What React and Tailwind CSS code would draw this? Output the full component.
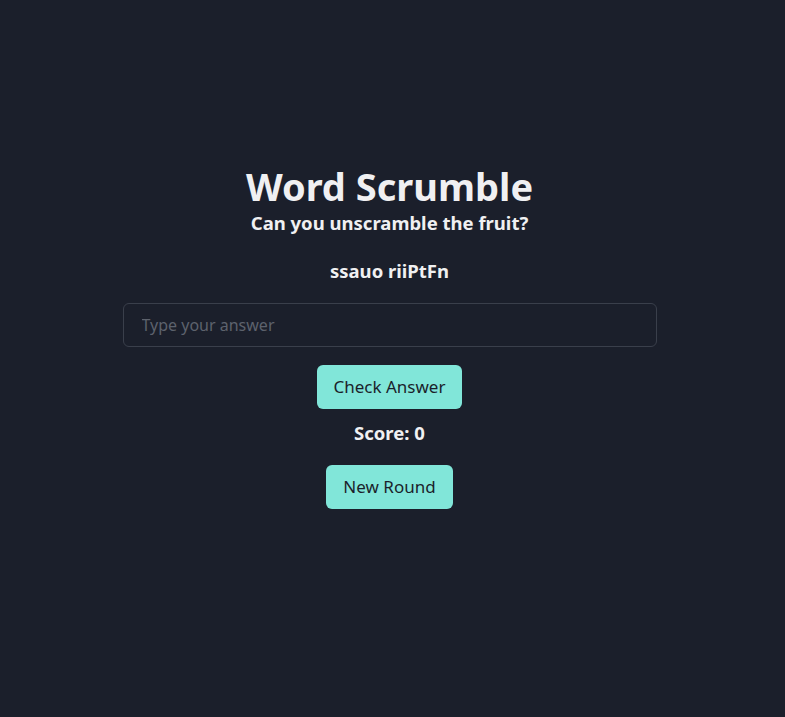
import { useState } from 'react';

export default function App() {
  const [answer, setAnswer] = useState('');
  const [score] = useState(0);

  return (
    <div className="min-h-[717px] w-full bg-[#1b1f2b] text-[#f0f0f2] font-['Noto_Sans',sans-serif] pr-[6px]">
      <div className="flex flex-col items-center pt-[162px]">
        <h1 className="text-[38px] font-bold leading-[48px]">Word Scrumble</h1>
        <p className="text-[18.5px] font-bold leading-[26px]">Can you unscramble the fruit?</p>
        <p className="mt-[22px] text-[18.5px] font-bold leading-[26px]">ssauo riiPtFn</p>
        <input
          value={answer}
          onChange={(e) => setAnswer(e.target.value)}
          placeholder="Type your answer"
          className="mt-[19px] h-[44px] w-[534px] rounded-[6px] border border-[#3a3f4b] bg-transparent px-[18px] text-[16px] text-[#f0f0f2] placeholder:text-[#5d626d] outline-none"
        />
        <button className="mt-[18px] h-[44px] rounded-[6px] bg-[#81e6d9] px-[17px] text-[17px] text-[#1b1f2b]">
          Check Answer
        </button>
        <p className="mt-[11px] text-[18.5px] font-bold leading-[26px]">Score: {score}</p>
        <button className="mt-[19px] h-[44px] rounded-[6px] bg-[#81e6d9] px-[17px] text-[17px] text-[#1b1f2b]">
          New Round
        </button>
      </div>
    </div>
  );
}
